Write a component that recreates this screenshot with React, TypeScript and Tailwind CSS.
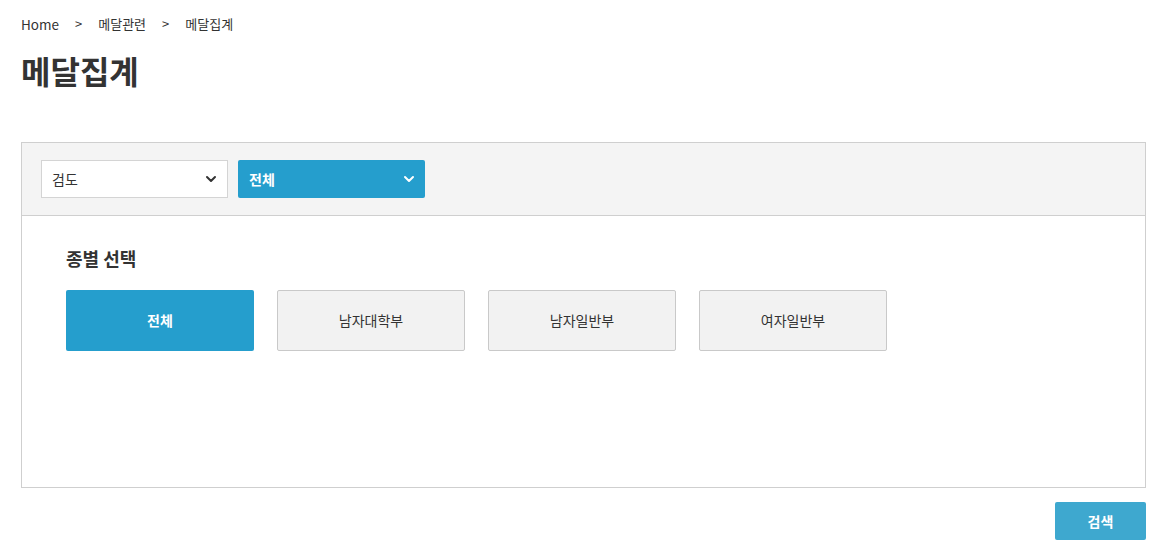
import { ChevronDown } from "lucide-react";

const categories = ["전체", "남자대학부", "남자일반부", "여자일반부"];

export default function App() {
  const selected = "전체";

  return (
    <div
      className="min-h-[560px] bg-white pl-[21px] pr-[26px] pt-[14px] text-[#333]"
      style={{ fontFamily: '"Noto Sans CJK KR", "Noto Sans", sans-serif' }}
    >
      <nav className="flex items-center gap-[16px] text-[13px] leading-[20px] text-[#333]">
        <span className="text-[13.5px]">Home</span>
        <span>&gt;</span>
        <span>메달관련</span>
        <span>&gt;</span>
        <span>메달집계</span>
      </nav>

      <h1 className="mt-[14px] text-[32px] font-bold leading-[44px] text-[#333]">
        메달집계
      </h1>

      <div className="mt-[50px] border border-[#cfcfcf]">
        <div className="flex gap-[10px] bg-[#f4f4f4] px-[19px] py-[17px]">
          <button className="flex h-[38px] w-[187px] items-center justify-between border border-[#d4d4d4] bg-white pl-[10px] pr-[8px] text-[14px] text-[#333]">
            <span>검도</span>
            <ChevronDown size={16} strokeWidth={3} className="text-[#333]" />
          </button>
          <button className="flex h-[38px] w-[187px] items-center justify-between rounded-[2px] bg-[#259ecd] pl-[11px] pr-[8px] text-[14px] font-bold text-white">
            <span>전체</span>
            <ChevronDown size={16} strokeWidth={3} className="text-white" />
          </button>
        </div>

        <div className="h-[272px] border-t border-[#cfcfcf] bg-white px-[44px] pt-[30px]">
          <h2 className="text-[18px] font-bold leading-[24px] text-[#333]">
            종별 선택
          </h2>
          <div className="mt-[20px] flex gap-[23px]">
            {categories.map((c) =>
              c === selected ? (
                <button
                  key={c}
                  className="h-[61px] w-[188px] rounded-[2px] bg-[#259ecd] text-[14px] font-bold text-white"
                >
                  {c}
                </button>
              ) : (
                <button
                  key={c}
                  className="h-[61px] w-[188px] rounded-[2px] border border-[#c9c9c9] bg-[#f2f2f2] text-[14px] text-[#333]"
                >
                  {c}
                </button>
              )
            )}
          </div>
        </div>
      </div>

      <div className="mt-[14px] flex justify-end">
        <button className="h-[38px] w-[91px] rounded-[2px] bg-[#3ea8cf] text-[14px] font-bold text-white">
          검색
        </button>
      </div>
    </div>
  );
}
